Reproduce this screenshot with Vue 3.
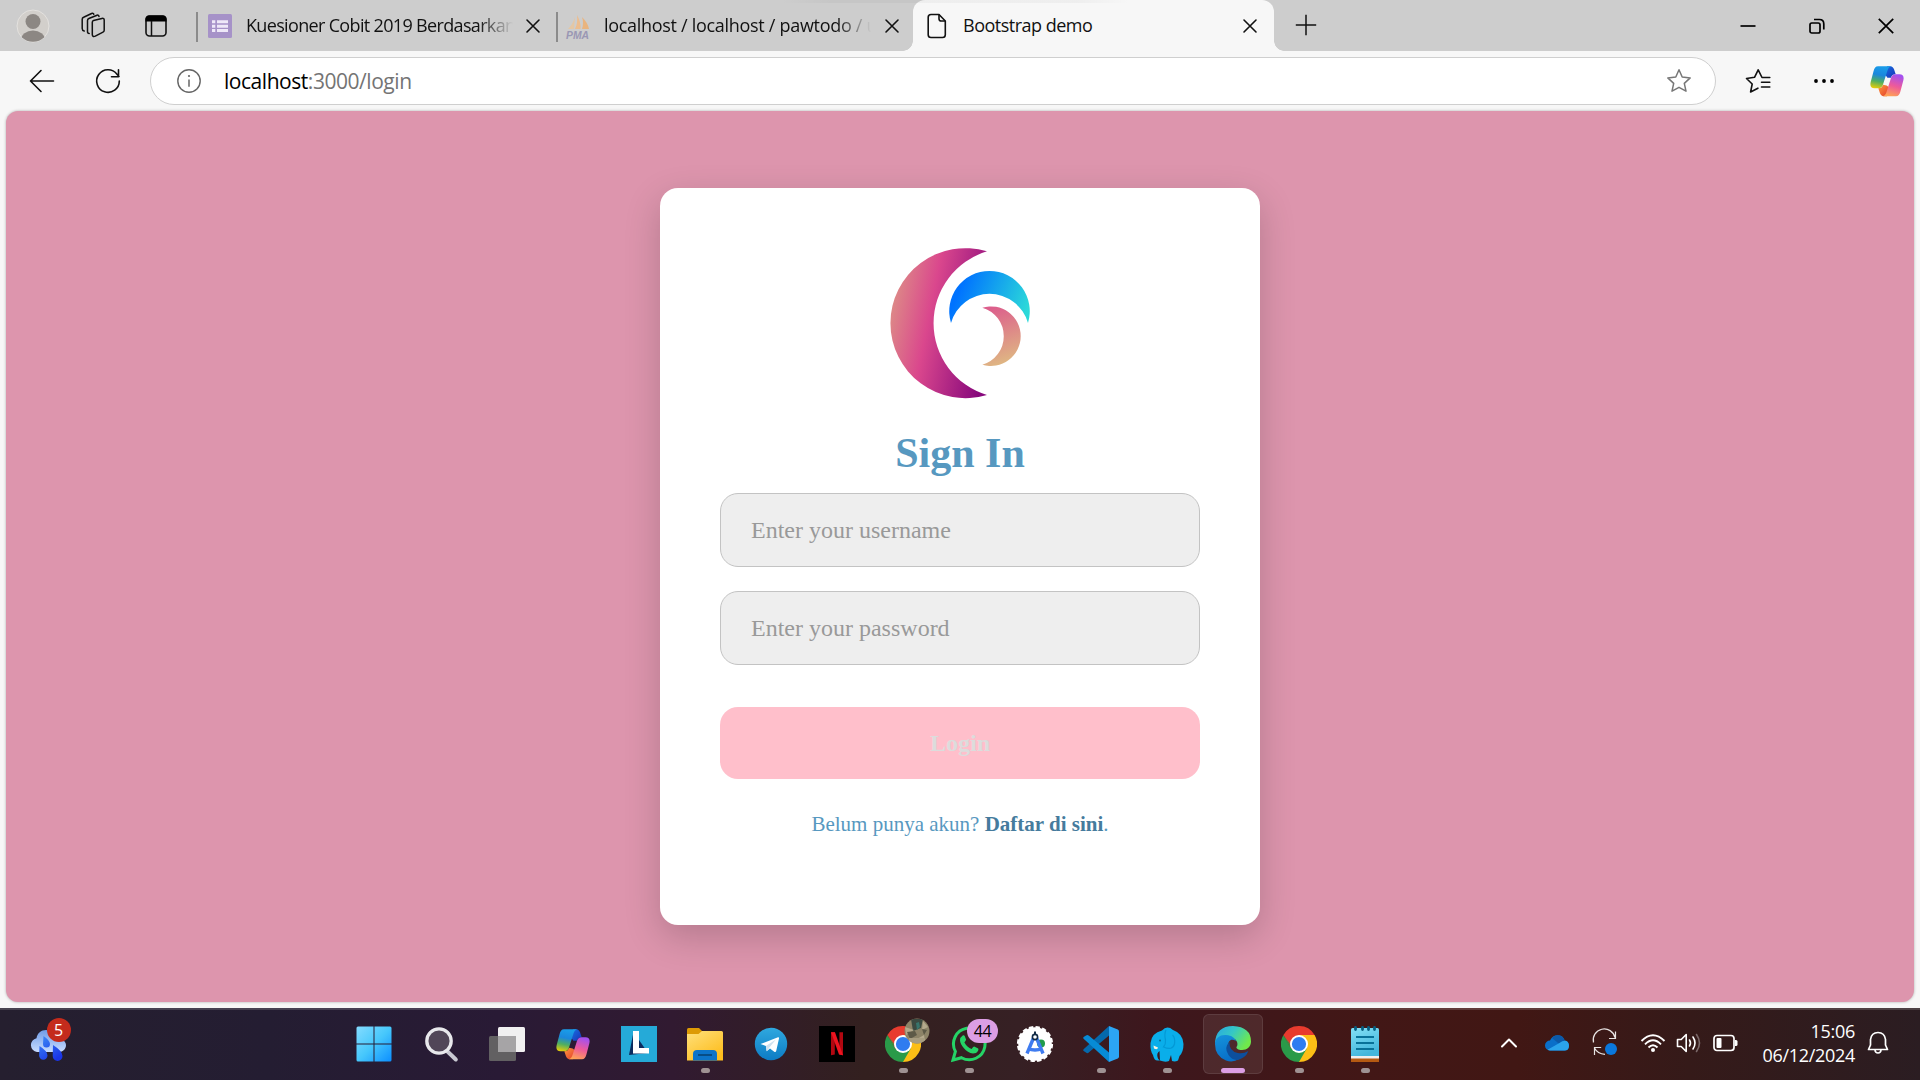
<script setup>
import { ref } from 'vue'

const username = ref('')
const password = ref('')

const apps = [
  { id: 'start' },
  { id: 'search' },
  { id: 'taskview' },
  { id: 'copilot' },
  { id: 'lapp' },
  { id: 'folder', running: true },
  { id: 'telegram' },
  { id: 'netflix' },
  { id: 'chromeProfile', running: true },
  { id: 'whatsapp', running: true },
  { id: 'studio' },
  { id: 'vscode', running: true },
  { id: 'elephant', running: true },
  { id: 'edge', running: true, active: true },
  { id: 'chrome', running: true },
  { id: 'notepad', running: true },
]
</script>

<template>
  <div class="screen">
    <svg class="defs" width="0" height="0">
      <defs>
        <linearGradient id="cpA" x1="0.3" y1="0" x2="0.1" y2="1">
          <stop offset="0" stop-color="#1a9be8" /><stop offset=".35" stop-color="#1b87dc" />
          <stop offset=".65" stop-color="#4fae62" /><stop offset="1" stop-color="#f5d000" />
        </linearGradient>
        <linearGradient id="cpB" x1="0.6" y1="0" x2="0.3" y2="1">
          <stop offset="0" stop-color="#a350f0" /><stop offset=".5" stop-color="#ee5a9a" /><stop offset="1" stop-color="#ffa552" />
        </linearGradient>
        <linearGradient id="cpC" x1="0" y1="0" x2="1" y2="1">
          <stop offset="0" stop-color="#1a6fe0" /><stop offset="1" stop-color="#1733b8" />
        </linearGradient>
        <linearGradient id="cpD" x1="0" y1="0" x2="1" y2="1">
          <stop offset="0" stop-color="#ff9a3c" /><stop offset="1" stop-color="#e23b2e" />
        </linearGradient>
        <symbol id="copilot" viewBox="0 0 34 31">
          <path d="M17 .3h3.200c2 0 3.300 1.300 3.900 3.200l1.600 4.800c-2.700 0-4 1.100-4.800 3.500h-3.500c-1.200-2-2-2.500-2.400-2.500z" fill="url(#cpC)" />
          <path d="M17 30.300h-3.200c-2 0-3.300-1.300-3.900-3.200l-1.600-4.800c2.700 0 4-1.100 4.700-3.500l3.600.8 2.400 1.700z" fill="url(#cpD)" />
          <path d="M8 .3h13.500c-2.300.5-3.300 2-4.100 4.500l-4.300 13.500c-.8 2.600-2.200 4-4.800 4H4.500C1 22.300-.3 19.800.7 16L3.600 5C4.400 2 5.600.3 8 .3z" fill="url(#cpA)" />
          <path d="M26 30.300H12.500c2.300-.5 3.300-2 4.100-4.500l4.300-13.500c.8-2.600 2.200-4 4.800-4h3.800c3.500 0 4.800 2.500 3.800 6.300l-2.900 11c-.8 3-2 4.700-4.400 4.700z" fill="url(#cpB)" />
        </symbol>
        <symbol id="chrome" viewBox="0 0 36 36">
          <path d="M18 18 2.410 9A18 18 0 0 1 33.590 9z" fill="#e83b2e" />
          <path d="M18 18V9h15.590A18 18 0 0 1 18 36z" fill="#fcbf16" />
          <path d="M2.410 9A18 18 0 0 0 18 36l7.800-13.500L10.200 22.500z" fill="#2a9a49" />
          <path d="M2.410 9 10.200 22.500 18 18V9z" fill="#e83b2e" />
          <path d="M2.410 9 10.200 22.500 9 18z" fill="#2a9a49" />
          <circle cx="18" cy="18" r="9" fill="#fff" /><circle cx="18" cy="18" r="7.100" fill="#2f7cf0" />
        </symbol>
        <symbol id="close" viewBox="0 0 16 16">
          <path d="M2 2 14 14M14 2 2 14" fill="none" stroke="#111" stroke-width="1.600" stroke-linecap="round" />
        </symbol>
      </defs>
    </svg>

    <header class="tabbar">
      <div class="drop-shade"></div>
      <div class="lead">
        <svg class="avatar" width="34" height="34" viewBox="0 0 34 34">
          <defs><clipPath id="av"><circle cx="17" cy="17" r="15.800" /></clipPath></defs>
          <circle cx="17" cy="17" r="16" fill="#d2cfcb" stroke="#e4e2df" stroke-width="1" />
          <g clip-path="url(#av)" fill="#8c8783"><circle cx="17" cy="12.500" r="7.500" /><ellipse cx="17" cy="31" rx="12" ry="9.500" /></g>
        </svg>
        <svg class="workspaces" width="26" height="26" viewBox="0 0 26 26" fill="none" stroke="#111" stroke-width="1.500" stroke-linejoin="round" stroke-linecap="round">
          <path d="M12.300 10.200q0-1.300 1.200-1.700l8.400-2.100q2.300-.4 2.300 1.600v10.200q0 1.300-1.200 1.900l-7.700 4q-3 1-3-1.500z" />
          <path d="M9.200 21.500q-1.700 0-1.700-2V8.500q0-1.400 1.400-2L17 3.200q1.800-.4 2 1.300" />
          <path d="M4.200 19q-2-.4-2-2.500V7.200q0-1.400 1.400-2l8-3.700q1.800-.6 2.200.8" />
        </svg>
        <svg class="vtabs" width="22" height="22" viewBox="0 0 22 22">
          <rect x="1" y="1" width="20" height="20" rx="3.500" fill="none" stroke="#111" stroke-width="1.600" />
          <path d="M.5 6.500V4Q.5.500 4 .5h14q3.500 0 3.500 3.500v2.500z" fill="#000" /><path d="M6.500 6v15" stroke="#111" stroke-width="1.500" />
        </svg>
      </div>
      <div class="tab tab1">
        <svg width="24" height="24" viewBox="0 0 24 24"><rect width="24" height="24" rx="1.500" fill="#a692c8" /><path d="M4 6.300h3.300v3H4zM4 10.700h3.300v3H4zM4 15h3.300v3H4zM9 6.300h11v3H9zM9 10.700h11v3H9zM9 15h11v3H9z" fill="#eee8f8" /></svg>
        <span class="title fade">Kuesioner Cobit 2019 Berdasarkan</span>
        <svg width="16" height="16"><use href="#close" /></svg>
      </div>
      <div class="tab tab2">
        <svg width="24" height="24" viewBox="0 0 24 24">
          <path d="M9 2 8 14H2Q7 9 9 2z" fill="#e4c7a5" /><path d="M11 0Q15 7 14.500 14H9Q12 8 11 0z" fill="#edbd8e" /><path d="M16 2Q22 8 23 14h-7Q18 8 16 2z" fill="#e9b47f" />
          <text x="0" y="23.500" textLength="23" lengthAdjust="spacingAndGlyphs" class="pma">PMA</text>
        </svg>
        <span class="title fade">localhost / localhost / pawtodo / u</span>
        <svg width="16" height="16"><use href="#close" /></svg>
      </div>
      <div class="tab tab3">
        <svg width="20" height="26" viewBox="0 0 20 26" fill="none" stroke="#111" stroke-width="1.600" stroke-linejoin="round"><path d="M12 1.500H4Q1.200 1.500 1.200 4.300v17.400q0 2.800 2.800 2.800h11.500q2.800 0 2.800-2.800V8z" /><path d="M12 1.500v4.200Q12 8 14.300 8h4" /></svg>
        <span class="title">Bootstrap demo</span>
        <svg width="16" height="16"><use href="#close" /></svg>
      </div>
      <svg class="plus" width="22" height="22" viewBox="0 0 22 22"><path d="M11 .8v20.400M.8 11h20.400" stroke="#111" stroke-width="1.500" /></svg>
      <div class="wincontrols">
        <svg width="16" height="16" viewBox="0 0 16 16"><path d="M.5 8h15" stroke="#000" stroke-width="1.700" /></svg>
        <svg width="16" height="16" viewBox="0 0 16 16" fill="none" stroke="#000" stroke-width="1.700"><rect x="1" y="5" width="10" height="10" rx="1.800" /><path d="M5 1.500h5.500Q14.800 1.500 14.800 6v5.500" /></svg>
        <svg width="16" height="16" viewBox="0 0 16 16"><path d="M.8.8 15.200 15.200M15.200.8.8 15.200" stroke="#000" stroke-width="1.700" /></svg>
      </div>
    </header>

    <nav class="toolbar">
      <svg class="back" width="26" height="24" viewBox="0 0 26 24" fill="none" stroke="#111" stroke-width="1.600" stroke-linecap="round" stroke-linejoin="round"><path d="M24.500 12H1.500M12 1.500 1.500 12 12 22.500" /></svg>
      <svg class="reload" width="26" height="26" viewBox="0 0 26 26" fill="none" stroke="#111" stroke-width="1.600" stroke-linecap="round" stroke-linejoin="round"><path d="M24.300 13A11.300 11.300 0 1 1 22 6.200L24 8.500M23.500 1.800v7h-7" /></svg>
      <div class="address">
        <svg class="info" width="26" height="26" viewBox="0 0 26 26"><circle cx="13" cy="13" r="11.200" fill="none" stroke="#666" stroke-width="1.400" /><path d="M13 11.500v7.300" stroke="#666" stroke-width="1.500" /><circle cx="13" cy="8" r="1.100" fill="#666" /></svg>
        <span class="url">localhost<i>:3000/login</i></span>
        <svg class="star" width="26" height="26" viewBox="0 0 26 26" fill="none" stroke="#777" stroke-width="1.500" stroke-linejoin="round"><path d="M13 1.800 16.200 9l8 .9-5.900 5.500 1.700 7.800-7-3.900-7 3.900 1.700-7.800L1.800 9.900l8-.9z" /></svg>
      </div>
      <svg class="favs" width="26" height="26" viewBox="0 0 26 26" fill="none" stroke="#111" stroke-width="1.600" stroke-linejoin="round" stroke-linecap="round"><path d="M24.800 9.500H17L13.200 1.800 9.500 9.300l-8 1.200 5.700 5.500-1.600 8 7.300-3.800M16.500 14.300h8.300M16.500 19h8.300" /></svg>
      <svg class="dots" width="20" height="6" viewBox="0 0 20 6"><circle cx="2" cy="3" r="1.900" /><circle cx="10" cy="3" r="1.900" /><circle cx="18" cy="3" r="1.900" /></svg>
      <svg class="cp" width="34" height="31"><use href="#copilot" /></svg>
    </nav>

    <main class="page">
      <form class="card" @submit.prevent>
        <svg class="logo" width="139" height="150" viewBox="92 83 417 450">
          <defs>
            <linearGradient id="l1" gradientUnits="userSpaceOnUse" x1="92" y1="260" x2="395" y2="320"><stop offset="0" stop-color="#dd8987" /><stop offset=".38" stop-color="#da478d" /><stop offset="1" stop-color="#87087c" /></linearGradient>
            <linearGradient id="l2" gradientUnits="userSpaceOnUse" x1="305" y1="190" x2="500" y2="270"><stop offset="0" stop-color="#0073ff" /><stop offset="1" stop-color="#2bd9d9" /></linearGradient>
            <linearGradient id="l3" gradientUnits="userSpaceOnUse" x1="395" y1="260" x2="450" y2="425"><stop offset="0" stop-color="#dc5e8c" /><stop offset="1" stop-color="#dfb783" /></linearGradient>
          </defs>
          <path d="M380 93A225 225 0 1 0 380 524A225 225 0 0 1 380 93z" fill="url(#l1)" />
          <path d="M272 308A120.800 120.800 0 1 1 503 308A120 120 0 0 0 272 308z" fill="url(#l2)" />
          <path d="M366 262A89.300 89.300 0 1 1 366 433A89 89 0 0 0 366 262z" fill="url(#l3)" />
        </svg>
        <h1>Sign In</h1>
        <input v-model="username" type="text" placeholder="Enter your username" />
        <input v-model="password" type="password" placeholder="Enter your password" />
        <button type="submit">Login</button>
        <p>Belum punya akun? <b>Daftar di sini</b>.</p>
      </form>
    </main>

    <footer class="taskbar">
      <div class="weather">
        <svg width="38" height="36" viewBox="0 0 38 36">
          <defs><linearGradient id="wc" x2="0" y2="1"><stop offset="0" stop-color="#6f9be6" /><stop offset="1" stop-color="#c8dcff" /></linearGradient><linearGradient id="wd" x2=".6" y2="1"><stop offset="0" stop-color="#3d8cf5" /><stop offset="1" stop-color="#1a35e8" /></linearGradient></defs>
          <path d="M8 26a7 7 0 0 1-.5-13.800C8.500 7 12 4 17 4c5 0 9 3 10 8 5 0 10 3 10 7s-3 7-7 7z" fill="url(#wc)" />
          <path d="M14.500 10q6.500 4.500 6.500 8a3.500 3.500 0 0 1-7 0zM10.500 20q8 5 8 9.500a4.200 4.200 0 0 1-8.400 0zM24 19q9.500 6 9.500 11a4.900 4.900 0 0 1-9.800 0z" fill="url(#wd)" />
        </svg>
        <span class="count">5</span>
      </div>

      <div class="apps">
        <div v-for="app in apps" :key="app.id" class="app" :class="{ active: app.active }">
          <svg v-if="app.id === 'start'" width="36" height="36" viewBox="0 0 36 36">
            <defs><linearGradient id="win" gradientUnits="userSpaceOnUse" x1="0" y1="0" x2="36" y2="36"><stop offset="0" stop-color="#86dcff" /><stop offset=".5" stop-color="#47c8fc" /><stop offset="1" stop-color="#0a8dff" /></linearGradient></defs>
            <path d="M2 .5h15.500v17H.5V2Q.5.500 2 .5zM18.500.5H34Q35.500.5 35.500 2v15.500h-17zM.5 18.500h17v17H2Q.5 35.500.5 34zM18.500 18.500h17V34q0 1.500-1.500 1.500H18.500z" fill="url(#win)" />
          </svg>
          <svg v-else-if="app.id === 'search'" width="36" height="36" viewBox="0 0 36 36">
            <path d="m24.500 25.500 8.300 8" stroke="#c9c9d2" stroke-width="4" stroke-linecap="round" /><circle cx="16" cy="15" r="12.200" fill="#514658" stroke="#e8e8ec" stroke-width="3.300" />
          </svg>
          <svg v-else-if="app.id === 'taskview'" width="36" height="36" viewBox="0 0 36 36">
            <rect x="0" y="10" width="27" height="25" rx="1.500" fill="#626062" /><rect x="9" y="1" width="27" height="25" rx="1.500" fill="#f1f0f1" /><path d="M9 10h18v16H9z" fill="#a6a4a6" />
          </svg>
          <svg v-else-if="app.id === 'copilot'" width="34" height="31"><use href="#copilot" /></svg>
          <svg v-else-if="app.id === 'lapp'" width="36" height="36" viewBox="0 0 36 36">
            <path d="M0 0h36v36H0z" fill="#25aad8" /><path d="M12.500 6 8 29l19-2z" fill="#0b2b5e" /><path d="M12 5h6v17h10v5.500H12z" fill="#fff" />
          </svg>
          <svg v-else-if="app.id === 'folder'" width="36" height="36" viewBox="0 0 36 36">
            <defs><linearGradient id="fo" x2=".7" y2="1"><stop offset="0" stop-color="#ffe07c" /><stop offset="1" stop-color="#fdbd1d" /></linearGradient></defs>
            <path d="M0 3.500Q0 2 1.500 2H12l3.500 3.500V12H0z" fill="#dd9a05" /><path d="M0 8h11.500L15 5h19.500Q36 5 36 6.500V34.500H0z" fill="url(#fo)" />
            <path d="M6 34.500V28q0-4 4-4h16q4 0 4 4v6.500z" fill="#0c74c9" /><path d="M11 29h14" stroke="#06406f" stroke-width="1.500" />
          </svg>
          <svg v-else-if="app.id === 'telegram'" width="36" height="36" viewBox="0 0 36 36">
            <defs><linearGradient id="tg" x2="0" y2="1"><stop offset="0" stop-color="#2fa8df" /><stop offset="1" stop-color="#0d7cc4" /></linearGradient></defs>
            <circle cx="18" cy="18" r="16.200" fill="url(#tg)" /><path d="M7.500 18 25 11.200q1.200-.3 1 1.200L23.200 25q-.5 1.500-2 .7L17 22.500l-3.300 2.800-.8-5.300z" fill="#fff" /><path d="m12.900 20 10-6.500-6.500 8-2.700 3.800z" fill="#cfe1ef" />
          </svg>
          <svg v-else-if="app.id === 'netflix'" width="36" height="36" viewBox="0 0 36 36">
            <path d="M0 0h36v36H0z" /><path d="M12 6.300h3.800V28.500L12 29.300zM20.400 6.300H24v23l-3.600-.8z" fill="#b20710" /><path d="M12 6.300h4L24 29.300l-4-.8z" fill="#ed1420" />
          </svg>
          <template v-else-if="app.id === 'chromeProfile'">
            <svg width="36" height="36"><use href="#chrome" /></svg>
            <svg class="profile" width="26" height="26" viewBox="0 0 26 26">
              <defs><clipPath id="pc"><circle cx="13" cy="13" r="12.500" /></clipPath></defs>
              <g clip-path="url(#pc)"><path d="M0 0h26v26H0z" fill="#8d8468" /><path d="M7 1h12l-2 9-8 3z" fill="#3b4a41" /><path d="m12 5 3-1 1 5-3 3z" fill="#38756c" /><path d="m1 9 9 3-8 5zM19 3l5 6-6 3zM13 21l7-4 1 6z" fill="#b4a98c" /><path d="m3 14 8-1 2 4-7 4zM18 11l5 1-3 5z" fill="#5d5a47" /><path d="M5 20h15v6H5z" fill="#a79d80" /></g>
            </svg>
          </template>
          <template v-else-if="app.id === 'whatsapp'">
            <svg width="36" height="36" viewBox="0 0 36 36">
              <path d="M2 34 4.400 25.500A15.800 15.800 0 1 1 10.500 31.700z" fill="none" stroke="#25d366" stroke-width="3" />
              <path d="M12 9.300q1.300-.2 1.700.8l1.400 3.400q.2.800-1.700 2.900 2.600 4.700 7.200 6.500 2-2.600 2.600-2.400l4 2q.6.500-.2 2.600-1.300 2.500-5 2.500C15 26.500 9.300 19 9 14.500q0-3.300 3-5.200z" fill="#25d366" />
            </svg>
            <span class="unread">44</span>
          </template>
          <svg v-else-if="app.id === 'studio'" width="36" height="36" viewBox="0 0 36 36">
            <circle cx="18" cy="18" r="16.800" fill="#fff" /><circle cx="18" cy="18" r="16.800" fill="none" stroke="#fff" stroke-width="2.600" stroke-dasharray="4.300 2.300" />
            <circle cx="24" cy="17.500" r="4" fill="#209b4b" />
            <path d="M16.500 12 10 27.500M19.500 12 26 27.500M10.500 22.500q7.500 3 15 0" fill="none" stroke="#3f7cf0" stroke-width="3.400" />
            <circle cx="18" cy="11" r="2.600" fill="#fff" stroke="#122b46" stroke-width="1.600" /><path d="M18 5.500V9" stroke="#122b46" stroke-width="2" />
          </svg>
          <svg v-else-if="app.id === 'vscode'" width="36" height="36" viewBox="0 0 36 36">
            <path d="M26 0v9.500L6 26.300q-1.500 1.500-3 .3L.6 25q-.9-.8 0-1.700z" fill="#0569ac" />
            <path d="M.6 11 3 9.400q1.500-1 3 .3L26 26.500V36L.6 12.800q-.9-.9 0-1.800z" fill="#078bd5" />
            <path d="m26 0 8.800 3.500Q36 4 36 5.500v25q0 1.500-1.200 2L26 36z" fill="#2ca5f4" />
          </svg>
          <svg v-else-if="app.id === 'elephant'" width="36" height="36" viewBox="0 0 36 36">
            <path d="M8.500 34.500Q5 34.500 4 29 1 25 1.500 17 2.500 7 13 4.500 18-1 24 4q10 3.500 10.500 14 0 8-4 12l-1.500 4.500q-3 1.500-6 .5l-1-6-2 6q-4 1.500-9-.5L10.500 25q-3 2-2 6 .5 3 2.500 3.500z" fill="#0aaeea" />
            <path d="M17 4q-2 4-.5 10 .5 4-2 7 9 4 11-3 1-6-2-9" fill="none" stroke="#0499d6" stroke-width="1.200" /><path d="m4.500 19.500 4.500 2q-.5 3-4 1z" fill="#f5f2df" /><circle cx="11" cy="14.500" r=".9" fill="#09618c" />
          </svg>
          <svg v-else-if="app.id === 'edge'" width="36" height="36" viewBox="0 0 36 36">
            <defs><linearGradient id="e1" x2="1" y2=".5"><stop offset="0" stop-color="#27a6e5" /><stop offset=".5" stop-color="#35c7c5" /><stop offset="1" stop-color="#70e94b" /></linearGradient><linearGradient id="e2" x2=".3" y2="1"><stop offset="0" stop-color="#1593dc" /><stop offset="1" stop-color="#0870c8" /></linearGradient></defs>
            <path d="M0 17Q1 0 18 0q18 1 18 15.500c0 5-4 8.500-9 8.500-4 0-6-1.500-5.500-3 1.500-1.500 1.500-6-2-8Q10 8 0 17z" fill="url(#e1)" />
            <path d="M0 18C0 12 5 8.500 11 9c6 .3 9 3.500 10 6-5-3-8 0-8 5 0 7 6 12 11 13Q18 37 11 34.500 0 30 0 18z" fill="url(#e2)" />
            <path d="M14.500 16q-6 5.500-1 13 5 7 12 4 6-2.500 7.800-8-5 3-10.500 2-9-2-8.300-11z" fill="#0d4f9d" />
          </svg>
          <svg v-else-if="app.id === 'chrome'" width="36" height="36"><use href="#chrome" /></svg>
          <svg v-else width="36" height="36" viewBox="0 0 36 36">
            <defs><linearGradient id="np" x2=".4" y2="1"><stop offset="0" stop-color="#83e0f5" /><stop offset="1" stop-color="#43b6dc" /></linearGradient></defs>
            <path d="M4 31h28v5H4z" fill="#b65a12" /><path d="M4 28h28v4.500H4z" fill="#eee" /><path d="M4 3.500Q4 2 5.500 2h25Q32 2 32 3.500V30H4z" fill="url(#np)" />
            <path d="M8.500 1.500v2M15.500 1.500v2M21.500 1.500v2M27.500 1.500v2" stroke="#065e80" stroke-width="2.800" stroke-linecap="round" /><path d="M9 11h18M9 17h18M9 23h18" stroke="#087198" stroke-width="1.900" />
          </svg>
          <span v-if="app.running" class="dot"></span>
        </div>
      </div>

      <div class="tray">
        <svg class="chev" width="18" height="12" viewBox="0 0 18 12"><path d="m2 9.500 7-7 7 7" fill="none" stroke="#fff" stroke-width="2" stroke-linecap="round" stroke-linejoin="round" /></svg>
        <svg class="cloud" width="24" height="16" viewBox="0 0 24 16"><path d="M5 15.500a5 5 0 0 1 0-10Q7.500.3 12.500.3q5.500 0 7.200 5.200Q24 6.500 24 11q-.3 4.500-4.500 4.500z" fill="#0a6fc9" /><path d="M7 2.900Q9.500.300 12.500.3q5.500 0 7.200 5.200l-6 3z" fill="#0c59a8" /><path d="M2.500 14.700 14.500 8q3-2.500 6.500-2.200 3 1.200 3 5.200-.3 4.500-4.500 4.500H5q-1.500 0-2.500-.8z" fill="#2ba4ec" /></svg>
        <svg class="sync" width="26" height="26" viewBox="0 0 26 26"><path d="M1.500 12.500A11 11 0 0 1 23 7.500M23.500 1.500v7H17M13 24.300Q5.500 24 2.500 18M2.500 25v-7.500h6.700" fill="none" stroke="#e8e4e3" stroke-width="1.200" /><circle cx="19" cy="19" r="6" fill="#0a78dd" /></svg>
        <svg class="wifi" width="26" height="20" viewBox="0 0 26 20"><path d="M1.500 8q11.500-11.500 23 0M5 11.300q8-8 16 0M8.500 14.500q4.500-4.500 9 0" fill="none" stroke="#fff" stroke-width="1.900" /><circle cx="13" cy="17" r="2" fill="#fff" /></svg>
        <svg class="sound" width="25" height="20" viewBox="0 0 25 20" fill="none" stroke="#fff" stroke-width="1.600" stroke-linejoin="round" stroke-linecap="round"><path d="M1.500 6.500h3.700l5-5v17l-5-5H1.500zM13.500 7q2 3 0 6M17 4q4 6 0 12" /><path d="M20.500 1.500q6 8.500 0 17" stroke="#7a6869" /></svg>
        <svg class="battery" width="25" height="18" viewBox="0 0 25 18"><rect x="1" y="1.500" width="20" height="15" rx="3" fill="none" stroke="#fff" stroke-width="1.700" /><rect x="3.500" y="4" width="5" height="10" rx="1" fill="#fff" /><path d="M22 6h1q1.500 0 1.500 1.500v3Q24.500 12 23 12h-1z" fill="#fff" /></svg>
        <div class="clock"><span>15:06</span><span>06/12/2024</span></div>
        <svg class="bell" width="22" height="24" viewBox="0 0 22 24" fill="none" stroke="#fff" stroke-width="1.700" stroke-linejoin="round" stroke-linecap="round"><path d="M1.500 18.500 3.500 14V8.500Q4.500 1.500 11 1.500T18.500 8.500V14l2 4.500zM8 19q.3 3 3 3t3-3" /></svg>
      </div>
    </footer>
  </div>
</template>

<style>
body { margin: 0; overflow: hidden; }
</style>

<style scoped>
.screen { width: 1920px; height: 1080px; display: flex; flex-direction: column; background: #f7f7f7; font-family: "Open Sans", "Noto Sans", sans-serif; color: #111; overflow: hidden; }
.defs { position: absolute; }
svg { display: block; flex: none; overflow: visible; }

.tabbar { position: relative; height: 51px; flex: none; display: flex; align-items: center; background: #cdcdcd; }
.drop-shade { position: absolute; left: 780px; top: 0; width: 350px; height: 3px; z-index: 1; background: linear-gradient(90deg, transparent, rgba(0,0,0,.035) 15%, rgba(0,0,0,.035) 85%, transparent); }
.lead { width: 196px; display: flex; align-items: center; }
.avatar { margin-left: 16px; }
.workspaces { margin-left: 30px; margin-top: -2px; }
.vtabs { margin-left: 39px; }
.tab { display: flex; align-items: center; box-sizing: border-box; height: 51px; }
.tab1, .tab2 { position: relative; }
.tab1::before, .tab2::before { content: ""; width: 2px; height: 30px; background: #8b8b8b; margin-top: 2px; }
.tab1 { width: 360px; }
.tab1 > svg:first-of-type { margin-left: 10px; margin-top: 1px; }
.tab2 { width: 357px; }
.tab2 > svg:first-of-type { margin-left: 8px; margin-top: 2px; }
.pma { font: italic bold 10.500px "Liberation Sans", sans-serif; fill: #9a97b4; }
.title { font-size: 18px; line-height: 24px; white-space: nowrap; letter-spacing: -.5px; margin-top: -1px; }
.tab1 .title { margin-left: 14px; width: 267px; letter-spacing: -.66px; }
.tab2 .title { margin-left: 14px; width: 267px; letter-spacing: -.3px; }
.fade { -webkit-mask-image: linear-gradient(90deg, #000 87%, transparent 100%); mask-image: linear-gradient(90deg, #000 87%, transparent 100%); }
.tab1 > svg:last-of-type { margin-left: 12px; }
.tab2 > svg:last-of-type { margin-left: 13px; }
.tab3 { position: relative; width: 361px; background: #f7f7f7; border-radius: 12px 12px 0 0; padding-left: 14px; }
.tab3::before, .tab3::after { content: ""; position: absolute; bottom: 0; width: 10px; height: 10px; }
.tab3::before { left: -10px; background: radial-gradient(circle at 0 0, transparent 9.5px, #f7f7f7 10px); }
.tab3::after { right: -10px; background: radial-gradient(circle at 100% 0, transparent 9.5px, #f7f7f7 10px); }
.tab3 .title { margin-left: 16px; width: 279px; }
.plus { margin-left: 21px; margin-top: -1px; }
.wincontrols { display: flex; gap: 53px; margin-left: auto; margin-right: 26px; }

.toolbar { height: 60px; flex: none; display: flex; align-items: center; background: #f7f7f7; }
.back { margin-left: 29px; }
.reload { margin-left: 40px; }
.address { box-sizing: border-box; width: 1566px; height: 48px; margin-left: 29px; border: 1.500px solid #cfcfcf; border-radius: 24px; background: #fff; display: flex; align-items: center; }
.info { margin-left: 25px; }
.url { margin-left: 22px; font-size: 21px; line-height: 28px; letter-spacing: -.46px; color: #000; }
.url i { font-style: normal; color: #747474; }
.star { margin-left: auto; margin-right: 23px; }
.favs { margin-left: 29px; }
.dots { margin-left: 43px; }
.cp { margin-left: 36px; }

.page { box-sizing: border-box; width: 1908px; height: 891px; margin-left: 6px; flex: none; background: #dd95ad; border-radius: 12px; box-shadow: 0 0 3px rgba(0,0,0,.3); display: flex; justify-content: center; align-items: flex-start; padding-top: 77px; }
.card { box-sizing: border-box; width: 600px; height: 737px; padding: 60px; background: #fff; border-radius: 18px; box-shadow: 0 12px 36px rgba(0,0,0,.19); display: flex; flex-direction: column; align-items: center; font-family: "Liberation Serif", serif; }
h1 { margin: 31px 0 16px; font-size: 42px; line-height: 48px; font-weight: bold; color: #5798c0; }
input { box-sizing: border-box; width: 480px; height: 74px; border: 1px solid #c3c3c3; border-radius: 18px; background: #eee; padding: 0 30px; font: 24px "Liberation Serif", serif; outline: none; }
input + input { margin-top: 24px; }
input::placeholder { color: #999; opacity: 1; }
button { width: 480px; height: 72px; margin-top: 42px; border: 0; border-radius: 18px; background: #ffbfcb; color: #dcdcdc; font: bold 24px "Liberation Serif", serif; padding: 0; }
p { margin: 33px 0 0; font-size: 21px; line-height: 24px; color: #5798c0; white-space: nowrap; }
p b { color: #457b9d; }

.taskbar { box-sizing: border-box; height: 72px; margin-top: 6px; flex: none; display: flex; align-items: center; border-top: 2px solid rgba(255,255,255,.16); background: linear-gradient(90deg, #251f2f 0, #241d32 14%, #291a35 26%, #311a31 35%, #33201f 45%, #362024 53%, #3d171d 60%, #421716 71%, #411714 79%, #351a19 88%, #2b1d22 100%) border-box; }
.weather { position: relative; width: 38px; height: 36px; margin-left: 29px; }
.weather svg { margin-top: -1px; }
.count { position: absolute; left: 17.500px; top: -9px; width: 24px; height: 24px; border-radius: 50%; background: #c42b1c; color: #fff; font-size: 16px; line-height: 24px; text-align: center; }
.apps { display: flex; margin-left: 275px; height: 70px; }
.app { position: relative; width: 66px; height: 70px; display: flex; align-items: center; justify-content: center; }
.app:first-child > svg { left: -1.500px; }
.app > svg { position: relative; margin-top: -2px; }
.app.active::before { content: ""; position: absolute; left: 3px; top: 4px; width: 58px; height: 58px; border: 1px solid rgba(255,255,255,.09); border-radius: 6px; background: rgba(255,255,255,.08); }
.dot { position: absolute; bottom: 7px; left: 28.500px; width: 9px; height: 5px; border-radius: 2.500px; background: #9f9293; }
.active .dot { left: 21px; width: 24px; background: #dc9ee4; }
.app > .profile { position: absolute; left: 34px; top: 8px; margin: 0; }
.unread { position: absolute; left: 31px; top: 9px; width: 31px; height: 24px; border-radius: 12px; background: #dc9ee4; color: #000; font-size: 16px; line-height: 24px; text-align: center; letter-spacing: -.3px; }
.tray { display: flex; align-items: center; margin-left: auto; color: #fff; height: 66px; margin-top: -4px; }
.cloud { margin-left: 27px; }
.sync { margin-left: 23px; }
.wifi { margin-left: 22px; }
.sound { margin-left: 10px; }
.battery { margin-left: 12px; }
.clock { width: 110px; margin-left: 7px; display: flex; flex-direction: column; text-align: right; font-size: 18px; line-height: 24px; letter-spacing: -.3px; }
.bell { margin-left: 12px; margin-right: 31px; }
</style>
